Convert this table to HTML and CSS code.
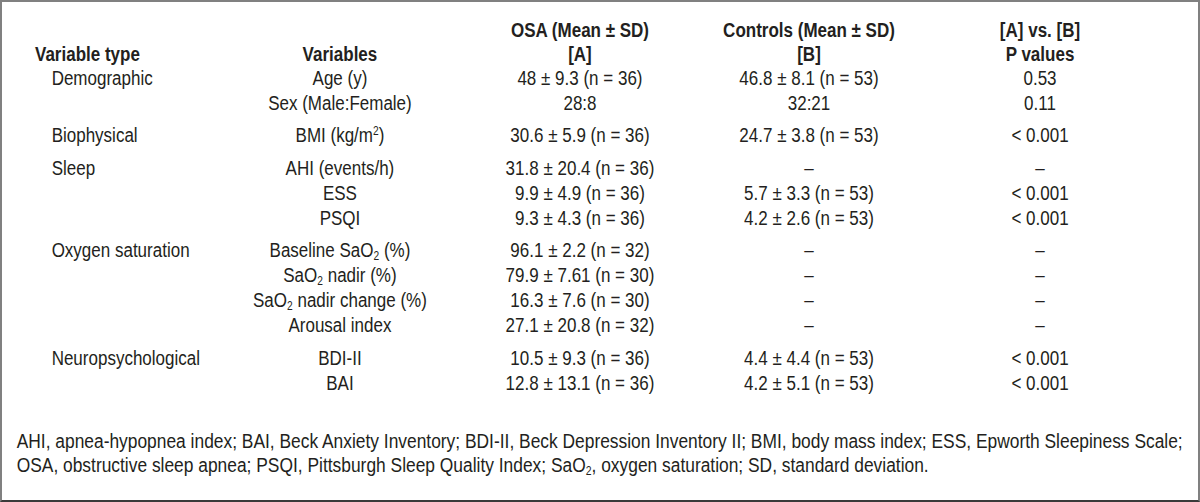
FILE: index.html
```html
<!DOCTYPE html>
<html lang="en">
<head>
<meta charset="utf-8">
<title>OSA vs Controls</title>
<link rel="stylesheet" href="styles.css">
</head>
<body>
<div class="frame">
  <div class="narrow table-wrap">
    <table class="data">
      <colgroup>
        <col class="c1"><col class="c2"><col class="c3"><col class="c4"><col class="c5">
      </colgroup>
      <thead>
        <tr><th class="left"></th><th></th><th>OSA (Mean ± SD)</th><th>Controls (Mean ± SD)</th><th>[A] vs. [B]</th></tr>
        <tr><th class="left">Variable type</th><th>Variables</th><th>[A]</th><th>[B]</th><th>P values</th></tr>
      </thead>
      <tbody>
        <tr><td class="type">Demographic</td><td>Age (y)</td><td>48 ± 9.3 (n = 36)</td><td>46.8 ± 8.1 (n = 53)</td><td>0.53</td></tr>
        <tr><td class="type"></td><td>Sex (Male:Female)</td><td>28:8</td><td>32:21</td><td>0.11</td></tr>
        <tr class="gs"><td class="type">Biophysical</td><td>BMI (kg/m<sup>2</sup>)</td><td>30.6 ± 5.9 (n = 36)</td><td>24.7 ± 3.8 (n = 53)</td><td>&lt; 0.001</td></tr>
        <tr class="gs"><td class="type">Sleep</td><td>AHI (events/h)</td><td>31.8 ± 20.4 (n = 36)</td><td>–</td><td>–</td></tr>
        <tr><td class="type"></td><td>ESS</td><td>9.9 ± 4.9 (n = 36)</td><td>5.7 ± 3.3 (n = 53)</td><td>&lt; 0.001</td></tr>
        <tr><td class="type"></td><td>PSQI</td><td>9.3 ± 4.3 (n = 36)</td><td>4.2 ± 2.6 (n = 53)</td><td>&lt; 0.001</td></tr>
        <tr class="gs"><td class="type">Oxygen saturation</td><td>Baseline SaO<sub>2</sub> (%)</td><td>96.1 ± 2.2 (n = 32)</td><td>–</td><td>–</td></tr>
        <tr><td class="type"></td><td>SaO<sub>2</sub> nadir (%)</td><td>79.9 ± 7.61 (n = 30)</td><td>–</td><td>–</td></tr>
        <tr><td class="type"></td><td>SaO<sub>2</sub> nadir change (%)</td><td>16.3 ± 7.6 (n = 30)</td><td>–</td><td>–</td></tr>
        <tr><td class="type"></td><td>Arousal index</td><td>27.1 ± 20.8 (n = 32)</td><td>–</td><td>–</td></tr>
        <tr class="gs"><td class="type">Neuropsychological</td><td>BDI-II</td><td>10.5 ± 9.3 (n = 36)</td><td>4.4 ± 4.4 (n = 53)</td><td>&lt; 0.001</td></tr>
        <tr><td class="type"></td><td>BAI</td><td>12.8 ± 13.1 (n = 36)</td><td>4.2 ± 5.1 (n = 53)</td><td>&lt; 0.001</td></tr>
      </tbody>
    </table>
  </div>
  <div class="narrow note-wrap">
    <p class="note">AHI, apnea-hypopnea index; BAI, Beck Anxiety Inventory; BDI-II, Beck Depression Inventory II; BMI, body mass index; ESS, Epworth Sleepiness Scale;<br>OSA, obstructive sleep apnea; PSQI, Pittsburgh Sleep Quality Index; SaO<sub>2</sub>, oxygen saturation; SD, standard deviation.</p>
  </div>
</div>
</body>
</html>
```
FILE: styles.css
```css
html, body {
  margin: 0;
  padding: 0;
  background: #ffffff;
}
body {
  font-family: "Liberation Sans", Arial, sans-serif;
  font-size: 20px;
  color: #231f20;
}
.frame {
  box-sizing: border-box;
  width: 1200px;
  height: 502px;
  border: 2px solid #808080;
  border-bottom-color: #3a3a3a;
  padding: 15.5px 0 0 0;
  overflow: hidden;
}
/* emulate a narrow (condensed) grotesque by horizontal compression */
.narrow {
  transform-origin: 0 0;
}
.table-wrap {
  width: 1407px;
  transform: scaleX(0.85);
}
.note-wrap {
  width: 1376px;
  transform: scaleX(0.869);
}
.data {
  table-layout: fixed;
  border-collapse: collapse;
  width: 1325.9px;
  margin-left: 38.8px;
}
.c1 { width: 217.6px; }
.c2 { width: 282.4px; }
.c3 { width: 282.4px; }
.c4 { width: 256.5px; }
.c5 { width: 287px; }
.data th,
.data td {
  padding: 0;
  text-align: center;
  white-space: nowrap;
  vertical-align: baseline;
}
.data th {
  font-weight: bold;
  line-height: 24px;
}
.data td {
  font-weight: normal;
  line-height: 25px;
}
.data th.left {
  text-align: left;
}
.data td.type {
  text-align: left;
  padding-left: 19.6px;
}
.data tr.gs td {
  padding-top: 7.5px;
}
sup, sub {
  font-size: 12px;
  line-height: 0;
}
sup { vertical-align: 7px; }
sub { vertical-align: -3px; }
.note {
  margin: 33.8px 0 0 16.9px;
  line-height: 24px;
  white-space: nowrap;
}
```
